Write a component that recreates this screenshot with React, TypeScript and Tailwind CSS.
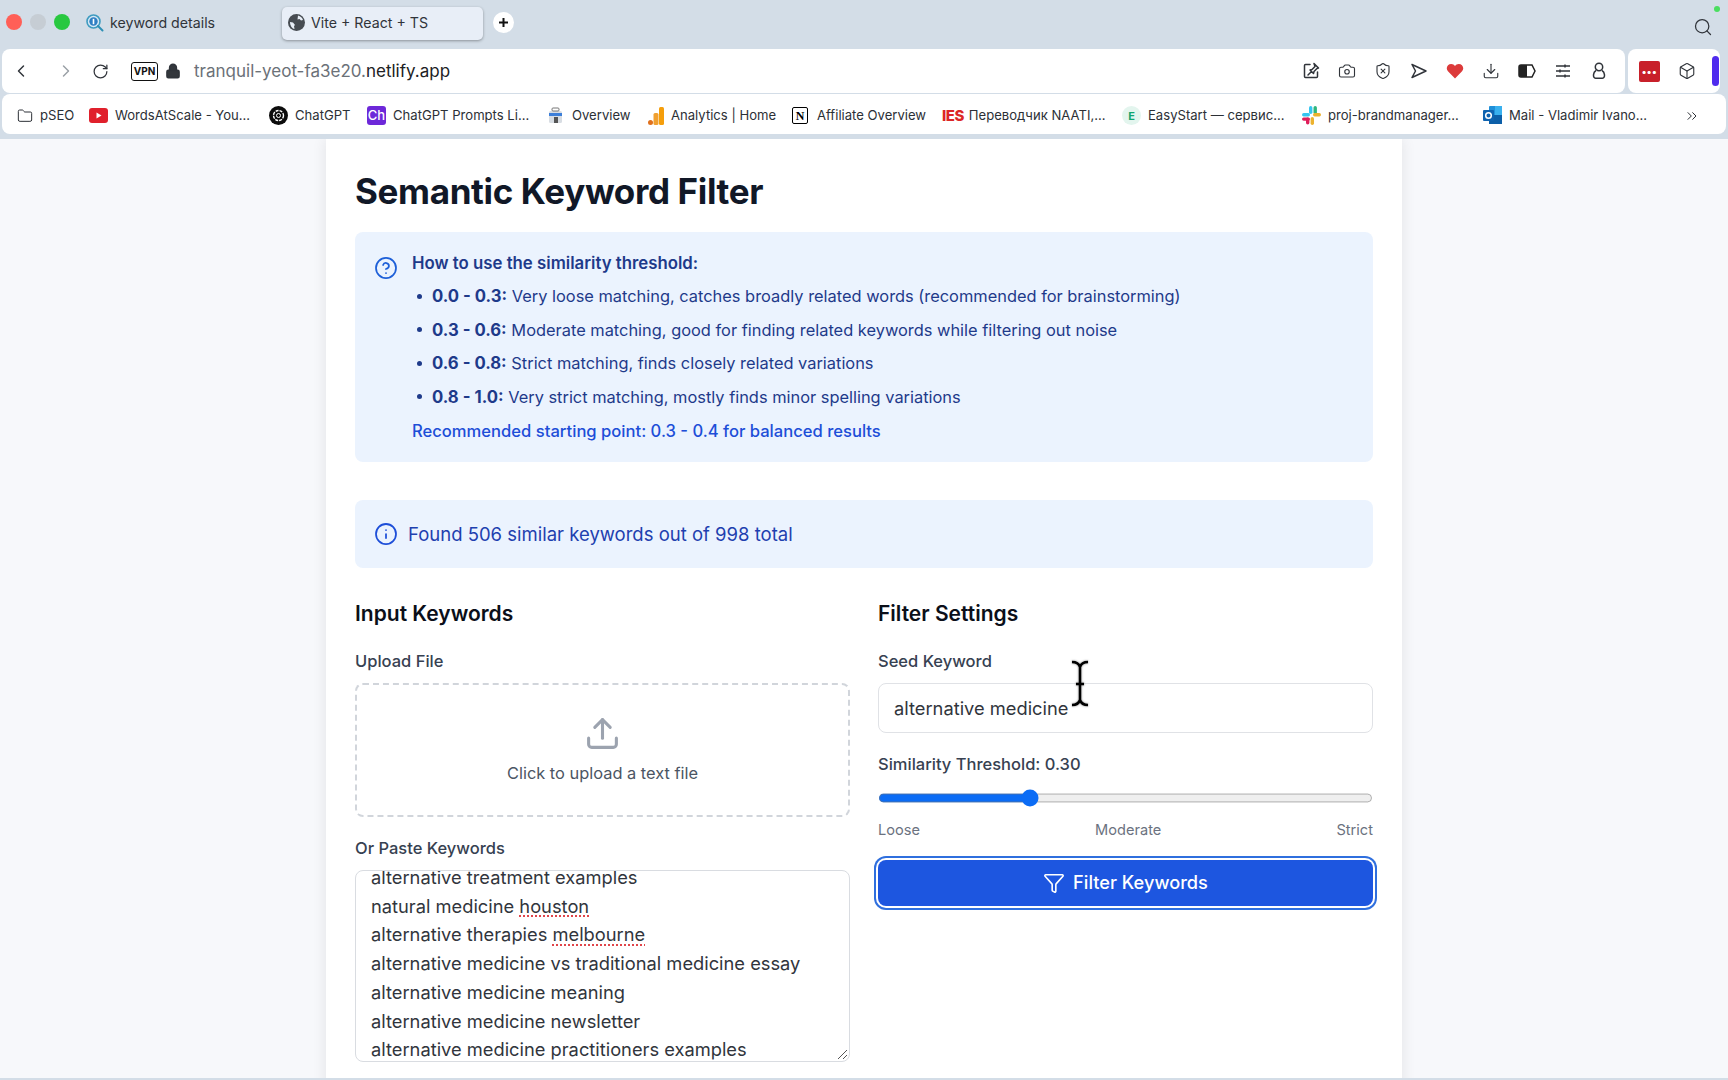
import {
  ChevronLeft,
  ChevronRight,
  ChevronsRight,
  CircleHelp,
  Box,
  Filter,
  Folder,
  Info,
  Lock,
  RotateCw,
  Search,
  Upload,
  Download,
  Camera,
  ShieldX,
} from "lucide-react";

const font = "font-['Inter','Noto_Sans',sans-serif]";

function YoutubeIcon() {
  return (
    <svg width="19" height="15" viewBox="0 0 19 15">
      <rect width="19" height="15" rx="3" fill="#e0202c" />
      <path d="M7.5 4.5v6l5-3z" fill="#fff" />
    </svg>
  );
}

function GptIcon() {
  return (
    <svg width="19" height="19" viewBox="0 0 19 19">
      <circle cx="9.5" cy="9.5" r="9.5" fill="#0c0c0c" />
      <circle cx="9.5" cy="9.5" r="5" fill="none" stroke="#fff" strokeWidth="1.4" strokeDasharray="3 1" />
      <circle cx="9.5" cy="9.5" r="2" fill="none" stroke="#fff" strokeWidth="1" />
    </svg>
  );
}

function ChIcon() {
  return (
    <div className="flex h-[19px] w-[19px] items-center justify-center rounded-[3px] bg-[#6d28d9] text-[13px] font-medium text-white">
      Ch
    </div>
  );
}

function OverviewIcon() {
  return (
    <svg width="17" height="18" viewBox="0 0 17 18">
      <rect x="2" y="4" width="13" height="12" rx="1.5" fill="#d8dde3" />
      <rect x="2" y="6" width="13" height="3" fill="#3d7fd9" />
      <rect x="5" y="1" width="7" height="3" rx="1" fill="none" stroke="#777" />
      <rect x="7" y="10" width="4" height="6" fill="#555" />
    </svg>
  );
}

function AnalyticsIcon() {
  return (
    <svg width="16" height="18" viewBox="0 0 16 18">
      <rect x="11" y="0" width="5" height="18" rx="1.5" fill="#f59e0b" />
      <rect x="5.5" y="6" width="5" height="12" rx="1.5" fill="#f0a030" />
      <circle cx="2.5" cy="15.5" r="2.5" fill="#e0701c" />
    </svg>
  );
}

function NotionIcon() {
  return (
    <div className="flex h-[17px] w-[16px] items-center justify-center rounded-[2px] border-[1.5px] border-black bg-white font-['Liberation_Serif',serif] text-[12px] font-bold text-black">
      N
    </div>
  );
}

function IesIcon() {
  return <span className="text-[15px] font-extrabold tracking-[-0.5px] text-[#dc2626]">IES</span>;
}

function EasyIcon() {
  return (
    <div className="flex h-[19px] w-[19px] items-center justify-center rounded-full bg-[#e3f5ee] text-[11px] font-bold text-[#10a56f]">
      E
    </div>
  );
}

function SlackIcon() {
  return (
    <svg width="19" height="19" viewBox="0 0 19 19">
      <rect x="7" y="0" width="3.4" height="8" rx="1.7" fill="#36c5f0" />
      <rect x="0" y="7" width="8" height="3.4" rx="1.7" fill="#36c5f0" />
      <rect x="11.5" y="0" width="3.4" height="8" rx="1.7" fill="#2eb67d" />
      <rect x="11" y="7" width="8" height="3.4" rx="1.7" fill="#ecb22e" />
      <rect x="8.6" y="11" width="3.4" height="8" rx="1.7" fill="#ecb22e" />
      <rect x="0" y="11.4" width="8" height="3.4" rx="1.7" fill="#e01e5a" />
      <rect x="4" y="11.4" width="3.4" height="7" rx="1.7" fill="#e01e5a" />
    </svg>
  );
}

function OutlookIcon() {
  return (
    <svg width="20" height="19" viewBox="0 0 20 19">
      <rect x="6" y="0" width="13" height="18" rx="1" fill="#1f8fd8" />
      <rect x="12" y="0" width="7" height="9" fill="#39b0ee" />
      <rect x="6" y="9" width="13" height="9" fill="#0c5fa8" />
      <rect x="0" y="4" width="11" height="11" rx="1" fill="#0f63b0" />
      <circle cx="5.5" cy="9.5" r="2.8" fill="none" stroke="#fff" strokeWidth="1.5" />
    </svg>
  );
}

function KeywordFavicon() {
  return (
    <svg width="18" height="18" viewBox="0 0 18 18">
      <circle cx="7.5" cy="7.5" r="6.5" fill="#d5e8f5" stroke="#3f9bc0" strokeWidth="1.6" />
      <circle cx="7.5" cy="7.5" r="4.2" fill="#2f7fc4" />
      <path d="M7.5 4.8v5.400" stroke="#fff" strokeWidth="1.600" />
      <path d="m12 12 4.500 4.500" stroke="#2d8fb5" strokeWidth="2" strokeLinecap="round" />
    </svg>
  );
}

function GlobeFilled() {
  return (
    <svg width="17" height="17" viewBox="0 0 17 17">
      <circle cx="8.5" cy="8.5" r="8.5" fill="#474c52" />
      <path d="M10 1.500c2.500.500 4.500 2.500 5 4.500l-2 .5-1.500-1.500-2 .5z" fill="#e8eef7" />
      <path d="M2 8l3 .5 2 2.500-1 1 .5 3C4 14.500 2 11.500 2 8z" fill="#e8eef7" />
    </svg>
  );
}

function PinSquareIcon() {
  return (
    <svg width="18" height="18" viewBox="0 0 18 18" fill="none" stroke="currentColor" strokeWidth="1.5" strokeLinejoin="round" strokeLinecap="round">
      <path d="M8 2.500H3.500a1 1 0 0 0-1 1v11a1 1 0 0 0 1 1h11a1 1 0 0 0 1-1V10" />
      <path d="M12 1.500 16.500 6l-1.500.5-3 3-.5 2L8 8l2-.5 3-3zM9.500 9.500 6 13" />
    </svg>
  );
}

function UserRoundIcon() {
  return (
    <svg width="18" height="18" viewBox="0 0 18 18" fill="none" stroke="currentColor" strokeWidth="1.5">
      <circle cx="9" cy="5" r="3.700" />
      <path d="M6 8.500C3 10 2.500 16.200 5.500 16.200h7c3 0 2.500-6.200-.5-7.700" />
    </svg>
  );
}

const bookmarks = [
  { icon: <Folder size={16} strokeWidth={1.5} />, label: "pSEO", width: "w-[72px]", gap: "gap-[7px]" },
  { icon: <YoutubeIcon />, label: "WordsAtScale - You...", width: "w-[180px]", gap: "gap-[7px]" },
  { icon: <GptIcon />, label: "ChatGPT", width: "w-[98px]", gap: "gap-[7px]" },
  { icon: <ChIcon />, label: "ChatGPT Prompts Li...", width: "w-[180px]", gap: "gap-[7px]" },
  { icon: <OverviewIcon />, label: "Overview", width: "w-[101px]", gap: "gap-[8px]" },
  { icon: <AnalyticsIcon />, label: "Analytics | Home", width: "w-[144px]", gap: "gap-[7px]" },
  { icon: <NotionIcon />, label: "Affiliate Overview", width: "w-[150px]", gap: "gap-[9px]" },
  { icon: <IesIcon />, label: "Переводчик NAATI,...", width: "w-[180px]", gap: "gap-[5px]" },
  { icon: <EasyIcon />, label: "EasyStart — сервис...", width: "w-[180px]", gap: "gap-[7px]" },
  { icon: <SlackIcon />, label: "proj-brandmanager...", width: "w-[181px]", gap: "gap-[7px]" },
  { icon: <OutlookIcon />, label: "Mail - Vladimir Ivano...", width: "w-[192px]", gap: "gap-[6px]" },
];

const ranges = [
  { range: "0.0 - 0.3:", text: "Very loose matching, catches broadly related words (recommended for brainstorming)" },
  { range: "0.3 - 0.6:", text: "Moderate matching, good for finding related keywords while filtering out noise" },
  { range: "0.6 - 0.8:", text: "Strict matching, finds closely related variations" },
  { range: "0.8 - 1.0:", text: "Very strict matching, mostly finds minor spelling variations" },
];

function BrowserChrome() {
  return (
    <div className="bg-[#d3dde7] text-[#30343a]">
      {/* вкладки */}
      <div className="relative flex h-[49px] items-start">
        <div className="ml-[6px] mt-[14px] flex gap-[8px]">
          <div className="h-[16px] w-[16px] rounded-full bg-[#ff5f57]" />
          <div className="h-[16px] w-[16px] rounded-full bg-[#c6cdd4]" />
          <div className="h-[16px] w-[16px] rounded-full bg-[#28c840]" />
        </div>
        <div className="ml-[10px] mt-[12px] flex w-[207px] items-center gap-[6px] pl-[6px] text-[14.200px]">
          <KeywordFavicon />
          <span>keyword details</span>
        </div>
        <div className="ml-[-5px] mt-[7px] flex h-[33px] w-[201px] items-center gap-[6px] rounded-[5px] bg-[#e8eef7] pb-[2px] pl-[6px] text-[14.200px] shadow-[0_1px_3px_rgba(0,0,0,0.35)]">
          <GlobeFilled />
          <span>Vite + React + TS</span>
        </div>
        <div className="ml-[10px] mt-[12px] flex h-[21px] w-[21px] items-center justify-center rounded-full bg-white text-[#111]">
          <svg width="11" height="11" viewBox="0 0 11 11">
            <path d="M5.500 1v9M1 5.500h9" stroke="currentColor" strokeWidth="2" />
          </svg>
        </div>
        <Search size={20} strokeWidth={1.5} className="ml-auto mr-[15px] mt-[17px]" />
        <div className="absolute right-[8px] top-[6px] h-[6px] w-[6px] rounded-full bg-[#4ade60]" />
      </div>

      {/* адресная строка */}
      <div className="flex h-[44px] gap-[3px] px-[2px]">
        <div className="flex w-[1623px] items-center rounded-[8px] bg-white pl-[9px]">
          <ChevronLeft size={20} strokeWidth={1.75} />
          <ChevronRight size={20} strokeWidth={1.75} className="ml-[25px] text-[#9aa0a6]" />
          <RotateCw size={17} strokeWidth={1.75} className="ml-[16px]" />
          <div className="ml-[22px] flex h-[19px] w-[27px] items-center justify-center rounded-[3px] border-[1.5px] border-[#111] text-[10px] font-bold text-[#111]">
            VPN
          </div>
          <Lock size={16} strokeWidth={2.5} className="ml-[7px] fill-[#33373c]" />
          <div className="ml-[13px] pt-[1px] text-[17px]">
            <span className="text-[#6b7178]">tranquil-yeot-fa3e20.</span>
            <span className="text-[#202124]">netlify.app</span>
          </div>
          <div className="ml-auto mr-[17px] flex items-center gap-[18px]">
            <PinSquareIcon />
            <Camera size={18} strokeWidth={1.5} />
            <ShieldX size={18} strokeWidth={1.5} />
            <svg width="18" height="18" viewBox="0 0 18 18" fill="none" stroke="currentColor" strokeWidth="1.5" strokeLinejoin="round">
              <path d="M2 2.500 16 9 2 15.500 5.500 9z" />
            </svg>
            <svg width="18" height="18" viewBox="0 0 24 24" fill="#dc3a3a">
              <path d="M12 22 2.600 12.400C-1 8.400 2 2.500 7 2.500c2.200 0 3.900 1 5 2.800 1.100-1.800 2.800-2.800 5-2.800 5 0 8 5.900 4.400 9.900z" />
            </svg>
            <Download size={18} strokeWidth={1.5} />
            <svg width="18" height="14" viewBox="0 0 18 14">
              <path d="M3 1h11l3 6-3 6H3a2 2 0 0 1-2-2V3a2 2 0 0 1 2-2z" fill="none" stroke="#222" strokeWidth="1.500" />
              <path d="M3 1h6v12H3a2 2 0 0 1-2-2V3a2 2 0 0 1 2-2z" fill="#222" />
            </svg>
            <svg width="18" height="18" viewBox="0 0 18 18" stroke="currentColor" strokeWidth="1.500">
              <path d="M2 4h14M2 9h14M2 14h14M11 2.500v3M6 7.500v3M11 12.500v3" />
            </svg>
            <UserRoundIcon />
          </div>
        </div>
        <div className="flex w-[92px] items-center rounded-[8px] bg-white pl-[11px]">
          <div className="flex h-[21px] w-[21px] items-center justify-center rounded-[2px] bg-[#c8202a] text-[10px] font-bold leading-none tracking-[0.5px] text-white">
            •••
          </div>
          <Box size={18} strokeWidth={1.5} className="ml-[18px]" />
          <div className="ml-[16px] h-[30px] w-[7px] rounded-full bg-[#4f2bee]" />
        </div>
      </div>

      {/* закладки */}
      <div className="mx-[2px] mt-[1px] flex h-[40px] items-center rounded-[8px] bg-white pl-[15px] pt-[4px] text-[13.100px] text-[#2c3036]">
        {bookmarks.map((b) => (
          <div key={b.label} className={`flex shrink-0 items-center ${b.width} ${b.gap}`}>
            {b.icon}
            <span className="whitespace-nowrap">{b.label}</span>
          </div>
        ))}
        <ChevronsRight size={16} strokeWidth={1.5} className="ml-[9px]" />
      </div>
    </div>
  );
}

export default function App() {
  return (
    <div className={`flex h-[1080px] flex-col overflow-hidden bg-[#d3dde7] ${font}`}>
      <BrowserChrome />
      <div className="mb-[2px] mt-[5px] flex-1 overflow-hidden bg-[#f7f8fb]">
        <main className="relative mx-auto h-[1000px] w-[1076px] bg-white px-[29px] pt-[30px] shadow-[0_0_14px_rgba(0,0,0,0.09)]">
          <h1 className="text-[35px] font-bold leading-[44px] tracking-[-0.35px] text-[#111827]">Semantic Keyword Filter</h1>

          <section className="mt-[19px] flex h-[230px] gap-[14px] rounded-[8px] bg-[#ebf3fe] pl-[19px] pt-[20px]">
            <CircleHelp size={24} strokeWidth={1.75} className="mt-[4px] shrink-0 text-[#1d5fd8]" />
            <div className="text-[16.400px] text-[#1e3a8a]">
              <p className="text-[16.800px] font-semibold leading-[22px]">How to use the similarity threshold:</p>
              <ul className="mt-[11px] flex flex-col gap-[11.500px]">
                {ranges.map((r) => (
                  <li key={r.range} className="flex h-[22px] items-center leading-[22px]">
                    <span className="ml-[5px] mr-[10px] h-[5px] w-[5px] rounded-full bg-[#1e3a8a]" />
                    <span>
                      <b className="text-[16.700px] font-bold">{r.range}</b> {r.text}
                    </span>
                  </li>
                ))}
              </ul>
              <p className="mt-[12px] text-[16.600px] font-medium leading-[22px] text-[#1d4ed8]">
                Recommended starting point: 0.3 - 0.4 for balanced results
              </p>
            </div>
          </section>

          <section className="mt-[38px] flex h-[68px] items-center gap-[10px] rounded-[8px] bg-[#ebf3fe] pl-[19px] text-[18.500px] text-[#1e40af]">
            <Info size={24} strokeWidth={1.75} className="text-[#1d4ed8]" />
            <span className="pt-[2px]">Found 506 similar keywords out of 998 total</span>
          </section>

          <div className="mt-[31px] grid grid-cols-2 gap-[28px]">
            <div>
              <h2 className="text-[21px] font-semibold leading-[30px] text-[#0b0f19]">Input Keywords</h2>
              <label className="mt-[20px] block text-[16.500px] font-medium leading-[24px] text-[#374151]">Upload File</label>
              <div className="mt-[10px] flex h-[134px] flex-col items-center justify-center rounded-[8px] border-2 border-dashed border-[#d1d5db]">
                <Upload size={37} strokeWidth={2} className="text-[#9ca3af]" />
                <span className="mt-[9px] text-[16.400px] text-[#4b5563]">Click to upload a text file</span>
              </div>
              <label className="mt-[19px] block text-[16.500px] font-medium leading-[24px] text-[#374151]">Or Paste Keywords</label>
              <div className="relative mt-[10px] h-[192px] overflow-hidden rounded-[8px] border border-[#d9dce1] pl-[15px] text-[18.300px] leading-[28.700px] text-[#31353c]">
                <div className="-mt-[8px]">
                  <div>alternative treatment examples</div>
                  <div>
                    natural medicine <span className="underline decoration-[#e0454a] decoration-dotted decoration-[1.5px] underline-offset-[3px]">houston</span>
                  </div>
                  <div>
                    alternative therapies <span className="underline decoration-[#e0454a] decoration-dotted decoration-[1.5px] underline-offset-[3px]">melbourne</span>
                  </div>
                  <div>alternative medicine vs traditional medicine essay</div>
                  <div>alternative medicine meaning</div>
                  <div>alternative medicine newsletter</div>
                  <div>alternative medicine practitioners examples</div>
                </div>
                <svg width="11" height="11" viewBox="0 0 11 11" className="absolute bottom-[1px] right-[1px] text-[#555]" stroke="currentColor">
                  <path d="M1 10 10 1M6 10l4-4" />
                </svg>
              </div>
            </div>

            <div>
              <h2 className="text-[21px] font-semibold leading-[30px] text-[#0b0f19]">Filter Settings</h2>
              <label className="mt-[20px] block text-[16.500px] font-medium leading-[24px] text-[#374151]">Seed Keyword</label>
              <div className="mt-[10px] flex h-[50px] items-center rounded-[8px] border border-[#e0e2e6] pl-[15px] pt-[1px] text-[18.300px] text-[#31353c]">
                alternative medicine
              </div>
              <label className="mt-[19px] block text-[16.500px] font-medium leading-[24px] text-[#374151]">Similarity Threshold: 0.30</label>
              <input
                type="range"
                min={0}
                max={1}
                step={0.01}
                defaultValue={0.3}
                className="mt-[10px] block h-[20px] w-[450px] accent-[#0b6cf5] [zoom:1.1]"
              />
              <div className="mt-[11px] flex justify-between text-[14.600px] leading-[20px] text-[#6b7280]">
                <span>Loose</span>
                <span>Moderate</span>
                <span>Strict</span>
              </div>
              <button className="mt-[20px] flex h-[46px] w-full items-center justify-center gap-[8px] rounded-[8px] bg-[#1d56e0] text-[18.200px] font-medium text-white ring-2 ring-[#2f6fde] ring-offset-2">
                <Filter size={22} strokeWidth={1.75} />
                Filter Keywords
              </button>
            </div>
          </div>

          {/* курсор поверх поля */}
          <svg width="24" height="47" viewBox="0 0 24 47" fill="none" stroke="#000" className="absolute left-[742px] top-[521px] drop-shadow-[0_0_1px_rgba(120,120,120,0.9)]">
            <path d="M4 2c5 0 7 2 8 5 1-3 3-5 8-5M12 7v33M4 45c5 0 7-2 8-5 1 3 3 5 8 5M8 24h8" strokeWidth="2.500" />
          </svg>
        </main>
      </div>
    </div>
  );
}
